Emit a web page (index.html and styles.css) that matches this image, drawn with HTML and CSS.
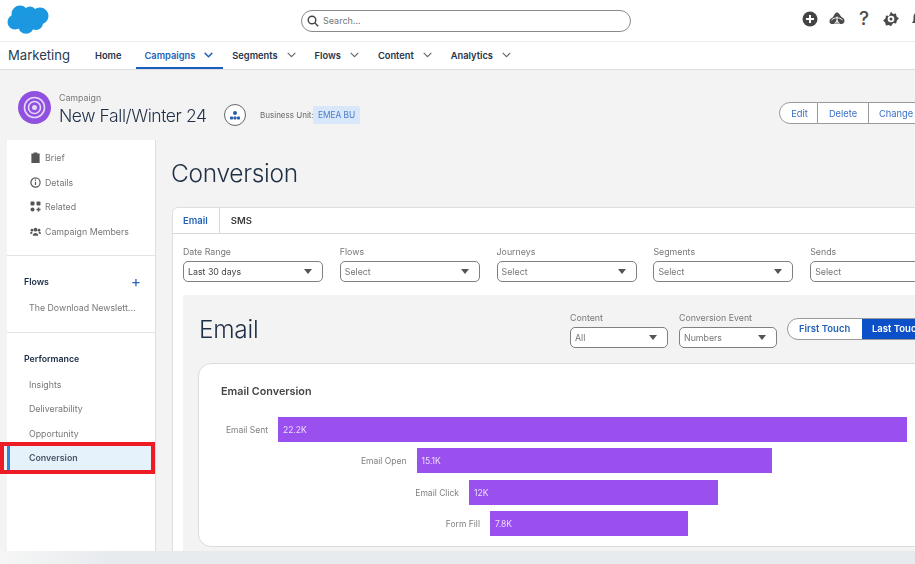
FILE: index.html
```html
<!DOCTYPE html>
<html lang="en">
<head>
<meta charset="utf-8">
<title>Conversion</title>
<link rel="stylesheet" href="styles.css">
</head>
<body>
<div class="app">
  <header class="topbar">
    <svg class="logo" viewBox="0 0 42 29" width="42" height="29"><g fill="#1b98e0"><circle cx="13" cy="9" r="8.5"/><circle cx="23" cy="8" r="6.5"/><circle cx="33" cy="11" r="8.5"/><circle cx="8" cy="17" r="7.5"/><circle cx="19" cy="21" r="7.8"/><circle cx="29" cy="18" r="7"/></g></svg>
    <div class="search">
      <svg width="12" height="12" viewBox="0 0 12 12" fill="none" stroke="#444" stroke-width="1.4"><circle cx="5" cy="5" r="3.8"/><path d="M8 8l3.2 3.2"/></svg>
      <span>Search...</span>
    </div>
    <div class="tools">
      <svg width="16" height="16" viewBox="0 0 16 16"><circle cx="8" cy="8" r="7.5" fill="#444"/><path d="M8 4v8M4 8h8" stroke="#fff" stroke-width="2"/></svg>
      <svg width="16" height="16" viewBox="0 0 16 16"><path d="M8 1.500c1 0 1.700.6 2.300 1.500l1.700 2.500c.3.500.6.700 1.200 1 1.300.6 2.300 1.700 2.300 3.200 0 2-1.500 3.300-3.300 3.300H3.800C2 13.500.5 12.200.5 10.200.5 8.700 1.500 7.600 2.800 7c.6-.3.900-.5 1.200-1l1.700-3C6.300 2.100 7 1.500 8 1.500z" fill="#4a4a4a"/><path d="M2.500 9c3.500-3 7.500-3 11 0M8 5.500v8M5.300 13.500L8 9.500l2.700 4" fill="none" stroke="#fff" stroke-width="1"/></svg>
      <span class="help">?</span>
      <svg width="16" height="16" viewBox="0 0 16 16"><path d="M8 .8l2 2.300 2.900-.6.700 2.900 2.300 2-2 2.200-.8 2.900-2.900-.5L8 15.200l-2.200-1.200-2.900.5-.8-2.900-2-2.200 2.300-2 .7-2.900 2.900.6z" fill="#4a4a4a"/><circle cx="8" cy="8" r="3.300" fill="#fff"/><circle cx="8" cy="8" r="1.500" fill="#4a4a4a"/></svg>
      <svg width="16" height="16" viewBox="0 0 16 16"><path d="M8 1c-3 0-4.500 2.500-4.500 5v3.500L2 12h12l-1.500-2.500V6C12.500 3.500 11 1 8 1z" fill="#4a4a4a"/></svg>
    </div>
  </header>

  <nav class="navbar">
    <span class="appname">Marketing</span>
    <a class="navitem home">Home</a>
    <a class="navitem active">Campaigns <svg class="chev" viewBox="0 0 9 6"><path d="M.7.9l3.800 3.800L8.300.9"/></svg></a>
    <a class="navitem">Segments <svg class="chev" viewBox="0 0 9 6"><path d="M.7.9l3.800 3.800L8.300.9"/></svg></a>
    <a class="navitem">Flows <svg class="chev" viewBox="0 0 9 6"><path d="M.7.9l3.800 3.800L8.300.9"/></svg></a>
    <a class="navitem">Content <svg class="chev" viewBox="0 0 9 6"><path d="M.7.9l3.800 3.800L8.300.9"/></svg></a>
    <a class="navitem">Analytics <svg class="chev" viewBox="0 0 9 6"><path d="M.7.9l3.800 3.800L8.300.9"/></svg></a>
  </nav>

  <section class="record">
    <svg class="record-icon" viewBox="0 0 33 33" width="33" height="33"><circle cx="16.500" cy="16.500" r="16.500" fill="#9050e0"/><g fill="none" stroke="#e6d6f8"><circle cx="16.500" cy="16.500" r="10" stroke-width="1.600"/><circle cx="16.500" cy="16.500" r="6" stroke-width="1.600"/></g><circle cx="16.500" cy="16.500" r="2.500" fill="#e6d6f8"/></svg>
    <div class="record-title">
      <span class="eyebrow">Campaign</span>
      <h1>New Fall/Winter 24</h1>
    </div>
    <span class="org-btn"><svg width="10" height="9" viewBox="0 0 10 9" fill="#2a5cab"><circle cx="5" cy="2" r="2"/><rect x="0" y="5.500" width="3" height="3" rx=".8"/><rect x="3.500" y="5.500" width="3" height="3" rx=".8"/><rect x="7" y="5.500" width="3" height="3" rx=".8"/></svg></span>
    <span class="bu-label">Business Unit:</span>
    <span class="bu-chip">EMEA BU</span>
    <div class="actions">
      <button class="action first">Edit</button>
      <button class="action">Delete</button>
      <button class="action">Change Owner</button>
    </div>
  </section>

  <div class="workspace">
    <aside class="sidebar">
      <div class="side-group links">
        <a class="side-link">
          <svg class="side-icon" viewBox="0 0 11 12" fill="#555"><path d="M1 1.500h2.500V.5h4v1H10V12H1z"/></svg>Brief</a>
        <a class="side-link">
          <svg class="side-icon" viewBox="0 0 11 11" fill="none" stroke="#555" stroke-width="1.200"><circle cx="5.500" cy="5.500" r="4.600"/><path d="M5.500 2.600v1.200M5.500 4.800V8"/></svg>Details</a>
        <a class="side-link">
          <svg class="side-icon" viewBox="0 0 11 11" fill="#555"><rect x=".5" y=".5" width="4" height="4" rx="1"/><rect x="6.500" y=".5" width="4" height="4" rx="1"/><circle cx="2.500" cy="8.500" r="2"/><path d="M8.500 6.500v4M6.500 8.500h4" stroke="#555" stroke-width="1.500"/></svg>Related</a>
        <a class="side-link">
          <svg class="side-icon" viewBox="0 0 12 10" fill="#555"><circle cx="6" cy="3" r="2"/><circle cx="2.200" cy="3.500" r="1.500"/><circle cx="9.800" cy="3.500" r="1.500"/><path d="M3 9.500c0-4 6-4 6 0zM0 7.500c0-2.200 2-2.500 2.500-2V7.500zM12 7.500c0-2.200-2-2.500-2.500-2V7.500z"/></svg>Campaign Members</a>
      </div>
      <div class="side-group flows">
        <div class="side-head"><strong>Flows</strong><span class="add">+</span></div>
        <a class="side-sub">The Download Newslett...</a>
      </div>
      <div class="side-group perf">
        <div class="side-head"><strong>Performance</strong></div>
        <a class="side-sub">Insights</a>
        <a class="side-sub">Deliverability</a>
        <a class="side-sub">Opportunity</a>
        <a class="side-sub current">Conversion</a>
        <span class="callout"></span>
      </div>
    </aside>

    <main class="main">
      <h2 class="page-title">Conversion</h2>
      <div class="card">
        <div class="tabs">
          <span class="tab on">Email</span>
          <span class="tab">SMS</span>
        </div>
        <div class="filters">
          <label class="field"><span class="field-label">Date Range</span><span class="select dark">Last 30 days<i class="caret"></i></span></label>
          <label class="field"><span class="field-label">Flows</span><span class="select">Select<i class="caret"></i></span></label>
          <label class="field"><span class="field-label">Journeys</span><span class="select">Select<i class="caret"></i></span></label>
          <label class="field"><span class="field-label">Segments</span><span class="select">Select<i class="caret"></i></span></label>
          <label class="field"><span class="field-label">Sends</span><span class="select">Select<i class="caret"></i></span></label>
        </div>
        <div class="panel">
          <div class="panel-head">
            <h3>Email</h3>
            <div class="panel-tools">
              <label class="field small"><span class="field-label">Content</span><span class="select">All<i class="caret"></i></span></label>
              <label class="field small"><span class="field-label">Conversion Event</span><span class="select">Numbers<i class="caret"></i></span></label>
              <div class="toggle"><span class="toggle-opt">First Touch</span><span class="toggle-opt on">Last Touch</span></div>
            </div>
          </div>
          <div class="chart">
            <h4>Email Conversion</h4>
            <div class="funnel">
              <div class="row"><span class="row-label" style="width:79px">Email Sent</span><span class="bar" style="width:629px">22.2K</span></div>
              <div class="row"><span class="row-label" style="width:217.500px">Email Open</span><span class="bar" style="width:355.500px">15.1K</span></div>
              <div class="row"><span class="row-label" style="width:270px">Email Click</span><span class="bar" style="width:249px">12K</span></div>
              <div class="row"><span class="row-label" style="width:291px">Form Fill</span><span class="bar" style="width:198px">7.8K</span></div>
            </div>
          </div>
        </div>
      </div>
    </main>
  </div>
  <div class="footstrip"></div>
</div>
</body>
</html>
```

FILE: styles.css
```css
* { box-sizing: border-box; }
html, body { margin: 0; height: 100%; }
body { font-family: Inter, "Liberation Sans", sans-serif; color: #1f2f45; background: #f3f3f3; overflow: hidden; }
.app { width: 915px; height: 564px; overflow: hidden; display: flex; flex-direction: column; position: relative; filter: blur(.3px); }
h1, h2, h3, h4 { margin: 0; font-weight: 300; }

.topbar { height: 42px; flex: none; background: #fff; border-bottom: 1px solid #ececec; display: flex; align-items: center; padding-left: 7px; position: relative; }
.logo { flex: none; margin-top: -3px; }
.search { width: 330px; height: 22px; margin-left: 252px; flex: none; border: 1px solid #8a8a8a; border-radius: 11px; display: flex; align-items: center; gap: 4px; padding-left: 5px; font-size: 9px; color: #777; }
.tools { display: flex; align-items: center; gap: 11px; margin-left: 171px; flex: none; margin-top: -3px; }
.tools svg { flex: none; }
.help { width: 16px; text-align: center; font-size: 19px; line-height: 16px; font-weight: 500; color: #4a4a4a; }

.navbar { height: 28px; flex: none; background: #fff; border-bottom: 1px solid #dcdcdc; display: flex; align-items: stretch; padding-left: 8px; }
.appname { font-size: 13.100px; line-height: 27px; color: #2b3a50; width: 79px; flex: none; }
.navitem { display: flex; align-items: center; gap: 9px; padding: 1px 9.500px 0; font-size: 9.300px; font-weight: 600; color: #25344a; white-space: nowrap; border-bottom: 2px solid transparent; height: 27px; }
.navitem.home { padding: 1px 14.500px 0 8px; }
.navitem.active { color: #2563b8; border-bottom-color: #1b5fc1; padding: 1px 9.500px 0 8.500px; }
.chev { width: 9px; height: 6px; fill: none; stroke: #666; stroke-width: 1.100; }
.active .chev { stroke: #2563b8; stroke-width: 1.500; }

.record { height: 70px; flex: none; display: flex; align-items: flex-start; padding-left: 18px; width: 1100px; }
.record-icon { flex: none; margin-top: 21px; }
.record-title { margin: 21.500px 0 0 8px; display: flex; flex-direction: column; width: 165px; }
.eyebrow { font-size: 8.800px; color: #777; line-height: 11px; }
h1 { font-size: 17.500px; line-height: 25px; letter-spacing: -.43px; color: #1f2f45; white-space: nowrap; }
.org-btn { width: 22px; height: 22px; margin-top: 34px; border: 1px solid #666; border-radius: 50%; background: #fff; display: flex; align-items: center; justify-content: center; flex: none; }
.bu-label { font-size: 8px; line-height: 18px; margin: 36px 0 0 14px; color: #666; width: 53px; flex: none; white-space: nowrap; }
.bu-chip { background: #d9e7fa; color: #4a7cc9; font-size: 8.300px; height: 18px; width: 47px; margin-top: 36px; line-height: 18px; text-align: center; border-radius: 2px; flex: none; }
.actions { display: flex; margin: 32px 0 0 419px; flex: none; height: 22px; }
.action { background: #fff; border: 1px solid #9a9a9a; border-left: 0; font: 400 9.300px Inter, "Liberation Sans", sans-serif; color: #3a6fc4; padding: 0 10px; white-space: nowrap; }
.action.first { border-left: 1px solid #9a9a9a; border-radius: 11px 0 0 11px; width: 39px; padding: 0 0 0 2px; }
.action:nth-child(2) { width: 51px; padding: 0; }

.workspace { flex: 1; min-height: 0; display: flex; padding-left: 7px; }
.sidebar { width: 149px; flex: none; background: #fff; border-right: 1px solid #dedede; position: relative; }
.side-group { border-bottom: 1px solid #e4e4e4; }
.side-group:last-child { border-bottom: 0; }
.links { height: 116px; padding-top: 5px; }
.flows { height: 77px; padding-top: 16px; }
.perf { padding-top: 16px; position: relative; }
.side-link { display: flex; align-items: center; height: 24.700px; padding-left: 23px; font-size: 8.800px; color: #777; gap: 4px; }
.side-icon { width: 11px; height: 11px; flex: none; }
.side-head { display: flex; justify-content: space-between; align-items: center; height: 18px; padding: 0 14px 0 17px; font-size: 8.800px; color: #1a2b45; }
.side-head strong { font-weight: 600; }
.add { color: #2563b8; font-size: 15px; line-height: 15px; font-weight: 400; }
.side-sub { display: flex; align-items: center; height: 24.500px; padding-left: 22px; font-size: 8.800px; color: #777; white-space: nowrap; }
.flows .side-sub { margin-top: 8px; height: 18px; }
.perf .side-head { margin-bottom: 5px; }
.side-sub.current { background: #e5f1fb; color: #4a5666; font-weight: 600; border-left: 3px solid #2f86de; padding-left: 19px; }
.callout { position: absolute; left: -7px; top: 109px; width: 155px; height: 32px; border: 4px solid #ed1c24; pointer-events: none; }

.main { flex: none; width: 900px; padding-left: 16px; }
.page-title { font-size: 24.500px; line-height: 34px; padding-top: 16px; height: 67px; letter-spacing: -.3px; color: #1f2f45; margin-left: -1px; }
.card { background: #fff; border: 1px solid #dedede; border-radius: 6px 0 0 0; height: 360px; }
.tabs { display: flex; height: 26px; border-bottom: 1px solid #d8d8d8; font-size: 9.500px; font-weight: 600; color: #3a3a3a; }
.tab { padding: 0 11px; line-height: 25px; }
.tab.on { color: #2563b8; border-right: 1px solid #d8d8d8; padding: 0 11px 0 10px; }
.filters { display: flex; gap: 16.800px; padding: 9px 0 0 10px; height: 61px; }
.field { display: flex; flex-direction: column; width: 140px; flex: none; }
.field-label { font-size: 8.800px; line-height: 17px; height: 17.500px; color: #777; white-space: nowrap; }
.select { height: 21.500px; border: 1px solid #808080; border-radius: 5px; background: #fff; display: flex; align-items: center; justify-content: space-between; padding: 0 10px 0 4px; font-size: 8.800px; color: #777; }
.select.dark { color: #444; }
.caret { width: 0; height: 0; border: 4.500px solid transparent; border-top: 5px solid #555; border-bottom: 0; }

.panel { background: #f3f3f3; margin-left: 10px; height: 270px; }
.panel-head { height: 68px; display: flex; padding-left: 16px; }
h3 { font-size: 24.500px; line-height: 34px; margin-top: 17px; width: 371px; letter-spacing: -.3px; color: #1f2f45; flex: none; }
.panel-tools { display: flex; flex: none; gap: 11px; padding-top: 14px; }
.field.small { width: 98px; }
.toggle { display: flex; height: 22px; margin: 9px 0 0 -1px; border: 1px solid #999; border-radius: 11px 0 0 11px; font-size: 9.500px; font-weight: 600; background: #fff; overflow: hidden; }
.toggle-opt { padding: 0 11px; line-height: 20px; color: #2563b8; white-space: nowrap; width: 74px; }
.toggle-opt.on { background: #0b50c9; color: #fff; padding: 0 10px; width: 80px; }

.chart { margin-left: 15px; width: 760px; height: 184px; background: #fff; border: 1px solid #dcdcdc; border-radius: 13px 0 0 13px; padding-top: 21px; }
h4 { font-size: 10.800px; font-weight: 600; color: #444; line-height: 14px; padding-left: 22px; }
.funnel { margin-top: 18px; display: flex; flex-direction: column; gap: 6.300px; }
.row { display: flex; height: 25px; align-items: stretch; }
.row-label { flex: none; text-align: right; padding-right: 10px; font-size: 8.500px; line-height: 27px; color: #808080; white-space: nowrap; }
.bar { flex: none; background: #9a50ee; color: #ecdcfc; font-size: 8.500px; line-height: 27px; padding-left: 5px; }

.footstrip { height: 13px; flex: none; background: linear-gradient(90deg, #f6f6f6, #e8ebee 12%); position: relative; }
```
